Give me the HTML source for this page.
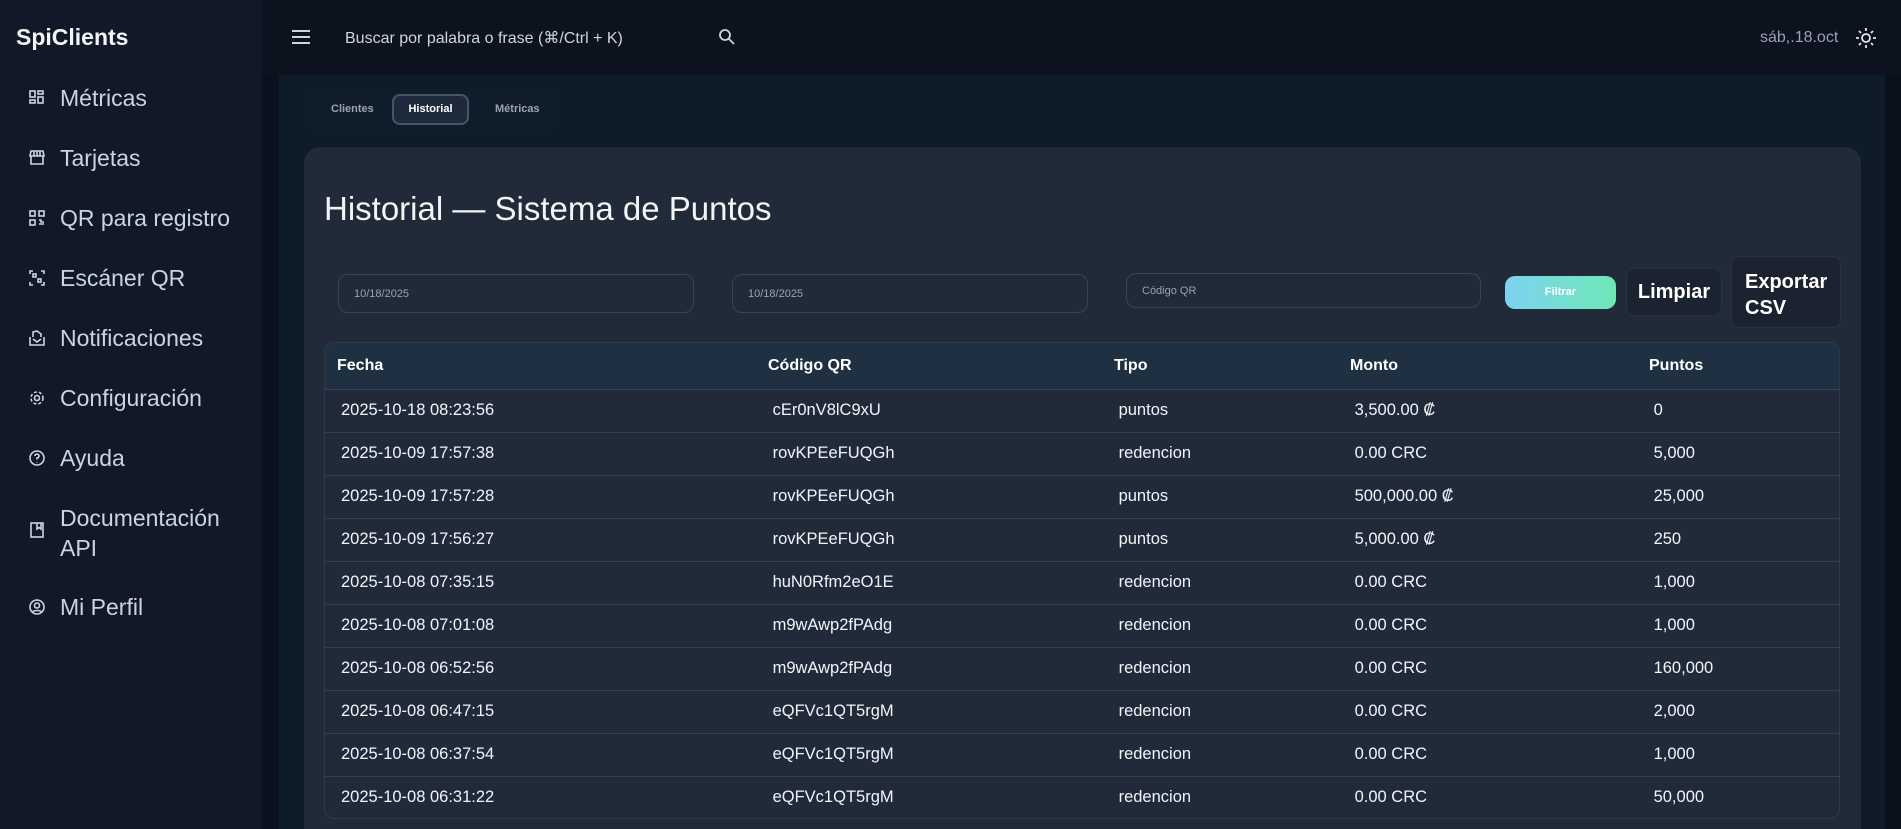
<!DOCTYPE html>
<html><head><meta charset="utf-8"><style>
*{box-sizing:border-box;margin:0;padding:0}
html,body{width:1901px;height:829px;overflow:hidden}
body{background:#0b111c;font-family:"Liberation Sans",sans-serif;color:#e5e7eb;position:relative}
.side{position:absolute;left:0;top:0;width:262px;height:829px;background:#111827}
.logo{position:absolute;left:16px;top:24px;font-size:23px;font-weight:bold;color:#f3f4f6}
.nav{position:absolute;left:0;width:262px;height:30px;font-size:23px;color:#cbd5e1}
.nav svg{position:absolute;left:28px;top:6px}
.nav span{position:absolute;left:60px;top:0;white-space:nowrap;line-height:30px}
.hdr{position:absolute;left:262px;top:0;right:0;height:75px;background:#0c121e}
.main{position:absolute;left:279px;top:75px;width:1606px;height:754px;background:#0e1b28}
.tabs{position:absolute;left:307px;top:90px;width:251px;height:40px;background:#0f1d2b;border-radius:10px;font-size:11px;font-weight:bold;color:#9ca3af}
.tabs div{position:absolute;top:4px;height:31px;line-height:31px;padding:0 12px}
.card{position:absolute;left:304px;top:147px;width:1557px;height:682px;background:#212a38;border-radius:16px 16px 0 0}
h1{position:absolute;left:324px;top:190px;font-size:33px;font-weight:normal;color:#f3f4f6}
.inp{position:absolute;border:1px solid #3a4454;border-radius:10px;font-size:11px;color:#9ca3af;padding-left:15px;display:flex;align-items:center}
.btn{position:absolute;border:1px solid #2a3240;border-radius:8px;background:#1c2330;color:#fff;font-weight:bold;font-size:20px}
table{border-collapse:collapse;font-size:16.5px}
th{height:46px;background:#1e3042;text-align:left;font-weight:bold;color:#fff;font-size:16px;border-bottom:1px solid #3a4454}
td{height:43px;border-bottom:1px solid #363f4d;color:#f1f5f9}
.tw{position:absolute;left:324px;top:342px;width:1516px;height:477px;border:1px solid #2f3a48;border-radius:10px;overflow:hidden}
</style></head><body>
<div class="side">
<div class="logo">SpiClients</div>
<div class="nav" style="top:83px"><svg width="18" height="18" viewBox="0 0 18 18" fill="none" stroke="#cbd5e1" stroke-width="1.6"><rect x="2" y="2" width="5" height="6"/><rect x="10" y="2" width="5" height="3"/><rect x="2" y="11" width="5" height="3"/><rect x="10" y="8" width="5" height="6"/></svg><span>Métricas</span></div>
<div class="nav" style="top:143px"><svg width="18" height="18" viewBox="0 0 18 18" fill="none" stroke="#cbd5e1" stroke-width="1.6"><path d="M3 2h12l1 5H2z M3 7v8h12V7 M6 2v5M9 2v5M12 2v5"/></svg><span>Tarjetas</span></div>
<div class="nav" style="top:203px"><svg width="18" height="18" viewBox="0 0 18 18" fill="none" stroke="#cbd5e1" stroke-width="1.6"><rect x="2" y="2" width="5" height="5"/><rect x="11" y="2" width="5" height="5"/><rect x="2" y="11" width="5" height="5"/><path d="M11 11h2v2h3M11 15h5"/></svg><span>QR para registro</span></div>
<div class="nav" style="top:263px"><svg width="18" height="18" viewBox="0 0 18 18" fill="none" stroke="#cbd5e1" stroke-width="1.6"><path d="M2 5V2h3M13 2h3v3M2 13v3h3M16 13v3h-3"/><rect x="5" y="5" width="3" height="3"/><rect x="10" y="10" width="3" height="3"/></svg><span>Escáner QR</span></div>
<div class="nav" style="top:323px"><svg width="18" height="18" viewBox="0 0 18 18" fill="none" stroke="#cbd5e1" stroke-width="1.6"><path d="M2 8v8h14V8M5 10l4 3 4-3M5 8V3l4-1 4 3v3"/></svg><span>Notificaciones</span></div>
<div class="nav" style="top:383px"><svg width="18" height="18" viewBox="0 0 18 18" fill="none" stroke="#cbd5e1" stroke-width="1.6"><circle cx="9" cy="9" r="2.5"/><circle cx="9" cy="9" r="6" stroke-dasharray="3 2"/></svg><span>Configuración</span></div>
<div class="nav" style="top:443px"><svg width="18" height="18" viewBox="0 0 18 18" fill="none" stroke="#cbd5e1" stroke-width="1.6"><circle cx="9" cy="9" r="7"/><path d="M7 7a2 2 0 1 1 2 2v1.5M9 13v.5"/></svg><span>Ayuda</span></div>
<div class="nav" style="top:503px"><svg width="18" height="18" viewBox="0 0 18 18" fill="none" stroke="#cbd5e1" stroke-width="1.6" style="top:18px"><rect x="3" y="2" width="12" height="14"/><path d="M9 2v6l2-1.5L13 8V2"/></svg><span>Documentación</span><span style="top:30px">API</span></div>
<div class="nav" style="top:592px"><svg width="18" height="18" viewBox="0 0 18 18" fill="none" stroke="#cbd5e1" stroke-width="1.6"><circle cx="9" cy="9" r="7"/><circle cx="9" cy="7.5" r="2.5"/><path d="M4.5 14c1.5-2 7.5-2 9 0"/></svg><span>Mi Perfil</span></div>
</div>
<div class="hdr">
<svg style="position:absolute;left:29px;top:29px" width="20" height="16" viewBox="0 0 20 16" stroke="#d1d5db" stroke-width="2"><path d="M1 2h18M1 8h18M1 14h18"/></svg>
<div style="position:absolute;left:83px;top:28px;font-size:16px;color:#d1d5db">Buscar por palabra o frase (⌘/Ctrl + K)</div>
<svg style="position:absolute;left:456px;top:28px" width="18" height="18" viewBox="0 0 18 18" fill="none" stroke="#d1d5db" stroke-width="1.8"><circle cx="7" cy="7" r="5"/><path d="M11 11l5 5"/></svg>
<div style="position:absolute;left:1498px;top:29px;font-size:16px;color:#94a3b8">sáb,.18.oct</div>
<svg style="position:absolute;left:1592px;top:26px" width="24" height="24" viewBox="0 0 24 24" fill="none" stroke="#e5e7eb" stroke-width="1.8"><circle cx="12" cy="12" r="4"/><path d="M12 2v3M12 19v3M2 12h3M19 12h3M5 5l2 2M17 17l2 2M5 19l2-2M17 7l2-2"/></svg>
</div>
<div class="main"></div>
<div class="tabs"><div style="left:12px">Clientes</div><div style="left:85px;width:77px;background:#1e293b;border:2px solid #475569;border-radius:8px;color:#fff;line-height:27px;text-align:center;padding:0">Historial</div><div style="left:176px">Métricas</div></div>
<div class="card"></div>
<h1>Historial — Sistema de Puntos</h1>
<div class="inp" style="left:338px;top:274px;width:356px;height:39px">10/18/2025</div>
<div class="inp" style="left:732px;top:274px;width:356px;height:39px">10/18/2025</div>
<div class="inp" style="left:1126px;top:273px;width:355px;height:35px">Código QR</div>
<div style="position:absolute;left:1505px;top:276px;width:111px;height:33px;border-radius:10px;background:linear-gradient(90deg,#7dd3f0,#6ee7b7);color:#fff;font-size:11px;font-weight:bold;text-align:center;line-height:33px">Filtrar</div>
<div class="btn" style="left:1626px;top:268px;width:96px;height:48px;line-height:46px;text-align:center">Limpiar</div>
<div class="btn" style="left:1731px;top:256px;width:110px;height:72px;padding:12px 0 0 13px;line-height:26px">Exportar<br>CSV</div>
<div class="tw">
<table style="width:100%">
<tr><th style="padding-left:12px;width:443px">Fecha</th><th style="width:346px">Código QR</th><th style="width:236px">Tipo</th><th style="width:299px">Monto</th><th>Puntos</th></tr>
<tr><td style="padding-left:16px">2025-10-18 08:23:56</td><td>&nbsp;cEr0nV8lC9xU</td><td>&nbsp;puntos</td><td>&nbsp;3,500.00 ₡</td><td>&nbsp;0</td></tr>
<tr><td style="padding-left:16px">2025-10-09 17:57:38</td><td>&nbsp;rovKPEeFUQGh</td><td>&nbsp;redencion</td><td>&nbsp;0.00 CRC</td><td>&nbsp;5,000</td></tr>
<tr><td style="padding-left:16px">2025-10-09 17:57:28</td><td>&nbsp;rovKPEeFUQGh</td><td>&nbsp;puntos</td><td>&nbsp;500,000.00 ₡</td><td>&nbsp;25,000</td></tr>
<tr><td style="padding-left:16px">2025-10-09 17:56:27</td><td>&nbsp;rovKPEeFUQGh</td><td>&nbsp;puntos</td><td>&nbsp;5,000.00 ₡</td><td>&nbsp;250</td></tr>
<tr><td style="padding-left:16px">2025-10-08 07:35:15</td><td>&nbsp;huN0Rfm2eO1E</td><td>&nbsp;redencion</td><td>&nbsp;0.00 CRC</td><td>&nbsp;1,000</td></tr>
<tr><td style="padding-left:16px">2025-10-08 07:01:08</td><td>&nbsp;m9wAwp2fPAdg</td><td>&nbsp;redencion</td><td>&nbsp;0.00 CRC</td><td>&nbsp;1,000</td></tr>
<tr><td style="padding-left:16px">2025-10-08 06:52:56</td><td>&nbsp;m9wAwp2fPAdg</td><td>&nbsp;redencion</td><td>&nbsp;0.00 CRC</td><td>&nbsp;160,000</td></tr>
<tr><td style="padding-left:16px">2025-10-08 06:47:15</td><td>&nbsp;eQFVc1QT5rgM</td><td>&nbsp;redencion</td><td>&nbsp;0.00 CRC</td><td>&nbsp;2,000</td></tr>
<tr><td style="padding-left:16px">2025-10-08 06:37:54</td><td>&nbsp;eQFVc1QT5rgM</td><td>&nbsp;redencion</td><td>&nbsp;0.00 CRC</td><td>&nbsp;1,000</td></tr>
<tr><td style="padding-left:16px;border:0">2025-10-08 06:31:22</td><td style="border:0">&nbsp;eQFVc1QT5rgM</td><td style="border:0">&nbsp;redencion</td><td style="border:0">&nbsp;0.00 CRC</td><td style="border:0">&nbsp;50,000</td></tr>
</table>
</div>
</body></html>
